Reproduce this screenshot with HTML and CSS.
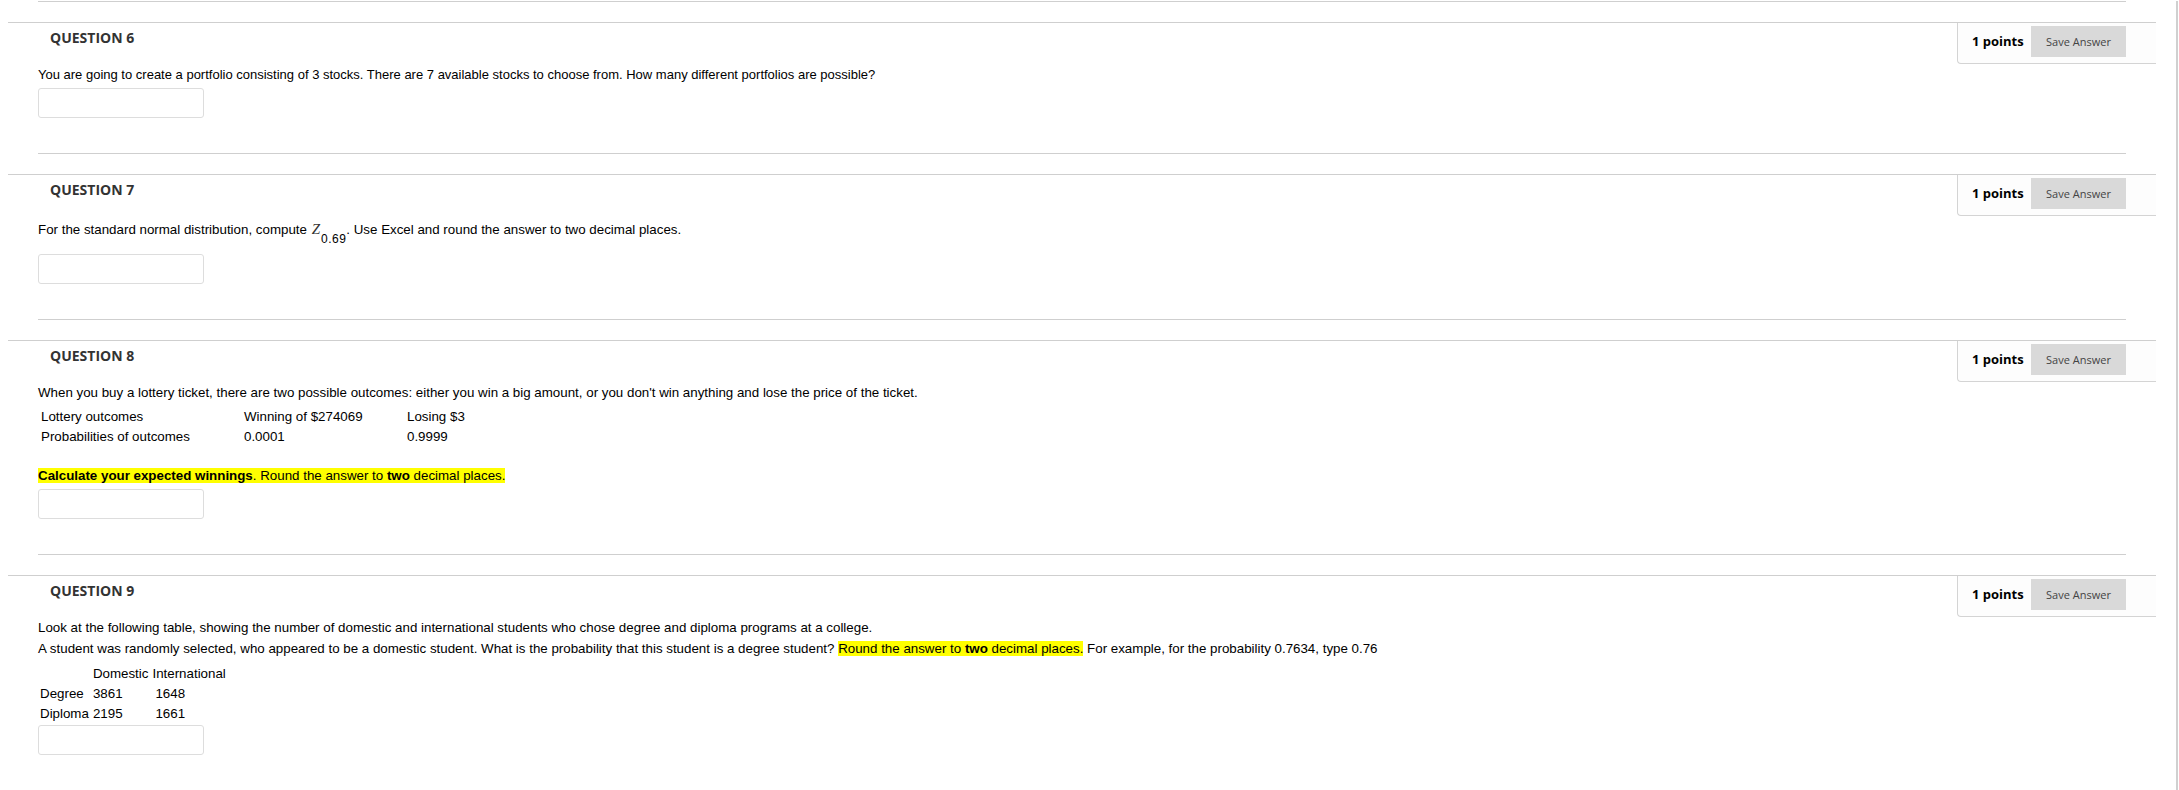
FILE: index.html
```html
<!DOCTYPE html>
<html lang="en">
<head>
<meta charset="utf-8">
<title>Questions</title>
<link rel="stylesheet" href="styles.css">
</head>
<body>
<div class="frame">
  <div class="inner-sep first"></div>

  <section class="question">
    <header class="q-head">
      <h3 class="q-title">QUESTION 6</h3>
      <div class="points-box"><span class="points">1 points</span><button class="save">Save Answer</button></div>
    </header>
    <div class="q-body">
      <p class="q-text">You are going to create a portfolio consisting of 3 stocks. There are 7 available stocks to choose from. How many different portfolios are possible?</p>
      <input class="answer" type="text">
    </div>
    <div class="inner-sep"></div>
  </section>

  <section class="question">
    <header class="q-head">
      <h3 class="q-title">QUESTION 7</h3>
      <div class="points-box"><span class="points">1 points</span><button class="save">Save Answer</button></div>
    </header>
    <div class="q-body">
      <p class="q-text pt math-line">For the standard normal distribution, compute <span class="math"><i class="mz">Z</i><span class="msub">0.69</span></span>. Use Excel and round the answer to two decimal places.</p>
      <input class="answer" type="text">
    </div>
    <div class="inner-sep"></div>
  </section>

  <section class="question">
    <header class="q-head">
      <h3 class="q-title">QUESTION 8</h3>
      <div class="points-box"><span class="points">1 points</span><button class="save">Save Answer</button></div>
    </header>
    <div class="q-body">
      <p class="q-text pt">When you buy a lottery ticket, there are two possible outcomes: either you win a big amount, or you don't win anything and lose the price of the ticket.</p>
      <table class="data lottery">
        <tr><td class="c1">Lottery outcomes</td><td class="c2">Winning of $274069</td><td>Losing $3</td></tr>
        <tr><td class="c1">Probabilities of outcomes</td><td class="c2">0.0001</td><td>0.9999</td></tr>
      </table>
      <p class="q-text pt hl-line"><mark><b>Calculate your expected winnings</b>. Round the answer to <b>two</b> decimal places. </mark></p>
      <input class="answer" type="text">
    </div>
    <div class="inner-sep"></div>
  </section>

  <section class="question">
    <header class="q-head">
      <h3 class="q-title">QUESTION 9</h3>
      <div class="points-box"><span class="points">1 points</span><button class="save">Save Answer</button></div>
    </header>
    <div class="q-body">
      <p class="q-text pt">Look at the following table, showing the number of domestic and international students who chose degree and diploma programs at a college.</p>
      <p class="q-text pt second">A student was randomly selected, who appeared to be a domestic student. What is the probability that this student is a degree student? <mark>Round the answer to <b>two</b> decimal places.</mark> For example, for the probability 0.7634, type 0.76</p>
      <table class="data students">
        <tr><td></td><td>Domestic</td><td>International</td></tr>
        <tr><td>Degree</td><td>3861</td><td class="num">1648</td></tr>
        <tr><td>Diploma</td><td>2195</td><td class="num">1661</td></tr>
      </table>
      <input class="answer tight" type="text">
    </div>
  </section>
</div>
</body>
</html>
```

FILE: styles.css
```css
html, body {
  margin: 0;
  padding: 0;
  background: #fff;
}

.frame {
  box-sizing: border-box;
  width: 2178px;
  min-height: 790px;
  padding: 0 20px 0 8px;
  border-right: 2px solid #d0d0d0;
  font-family: "Liberation Sans", Arial, sans-serif;
  color: #000;
}

.inner-sep {
  margin: 35px 30px 0;
  border-top: 1px solid #cfcfcf;
}

.inner-sep.first {
  margin-top: 1px;
}

.question {
  margin-top: 20px;
  border-top: 1px solid #cfcfcf;
}

.q-head {
  display: flex;
  align-items: flex-start;
  justify-content: space-between;
}

.q-title {
  margin: 0;
  padding: 6px 0 0 42px;
  font-family: "Open Sans", sans-serif;
  font-weight: 700;
  font-size: 14px;
  line-height: 18px;
  color: #333;
}

.points-box {
  box-sizing: border-box;
  width: 199px;
  height: 41px;
  display: flex;
  align-items: center;
  padding: 0 30px 3px 14px;
  border-left: 1px solid #d4d4d4;
  border-bottom: 1px solid #d4d4d4;
  border-bottom-left-radius: 4px;
  background: #fdfdfd;
}

.points {
  font-family: "Open Sans", sans-serif;
  font-weight: 700;
  font-size: 13px;
  color: #000;
  white-space: nowrap;
  position: relative;
  top: -1px;
}

.save {
  margin-left: auto;
  width: 95px;
  height: 31px;
  border: 0;
  border-radius: 0;
  background: #d9d9d9;
  font-family: "Open Sans", sans-serif;
  font-size: 11px;
  color: #444;
  padding: 0;
}

.q-body {
  padding: 0 30px;
}

.q-text {
  margin: 0;
  padding-top: 3px;
  font-size: 13px;
  line-height: 16px;
  white-space: nowrap;
}

.q-text.pt {
  font-size: 13.33px;
}

.q-text.second {
  padding-top: 5px;
}

.math-line {
  padding-top: 5px;
  height: 33px;
  box-sizing: border-box;
}

.math {
  white-space: nowrap;
  margin-left: 1px;
}

.mz {
  font-family: "Liberation Serif", "Times New Roman", serif;
  font-style: italic;
  font-size: 15px;
  color: #333;
}

.msub {
  position: relative;
  top: 9px;
  margin-left: 1px;
  font-size: 12px;
  letter-spacing: 0.5px;
}

mark {
  background: #ffff00;
  color: #000;
}

.hl-line {
  margin-top: 18px;
}

.data {
  border-collapse: collapse;
  font-size: 13.33px;
  margin-left: 0;
}

.data td {
  padding: 0 3px;
  height: 20px;
  line-height: 16px;
  white-space: nowrap;
}

.lottery {
  margin-top: 6px;
}

.lottery .c1 {
  width: 197px;
}

.lottery .c2 {
  width: 157px;
}

.students {
  margin-top: 7px;
}

.students td {
  padding: 0 2px;
}

.students .num {
  padding-left: 5px;
}

.answer {
  display: block;
  box-sizing: border-box;
  width: 166px;
  height: 30px;
  margin-top: 5px;
  border: 1px solid #ddd;
  border-radius: 3px;
  background: #fff;
  padding: 0 6px;
}

.answer.tight {
  margin-top: 1px;
}
```
